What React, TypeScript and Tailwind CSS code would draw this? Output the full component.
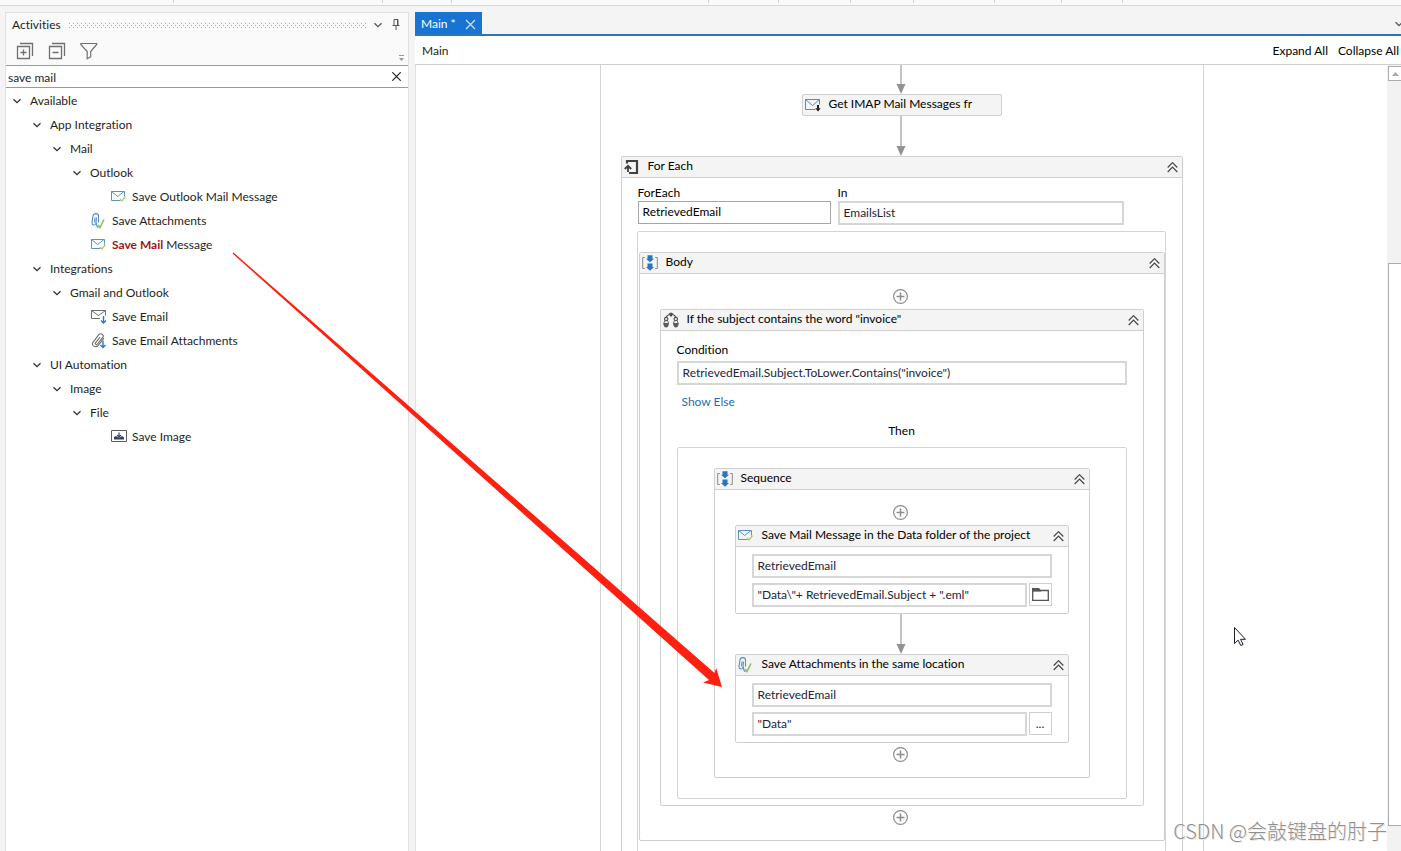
import React from 'react';

type IconName =
  | 'mailCheck'
  | 'clipCheck'
  | 'mailDown'
  | 'clipDown'
  | 'image'
  | 'imap'
  | 'loop'
  | 'sequence'
  | 'scales';

interface TreeNode {
  label: string;
  match?: string;
  icon?: IconName;
  children?: TreeNode[];
}

const tree: TreeNode[] = [
  {
    label: 'Available',
    children: [
      {
        label: 'App Integration',
        children: [
          {
            label: 'Mail',
            children: [
              {
                label: 'Outlook',
                children: [
                  { label: 'Save Outlook Mail Message', icon: 'mailCheck' },
                ],
              },
              { label: 'Save Attachments', icon: 'clipCheck' },
              { label: ' Message', match: 'Save Mail', icon: 'mailCheck' },
            ],
          },
        ],
      },
      {
        label: 'Integrations',
        children: [
          {
            label: 'Gmail and Outlook',
            children: [
              { label: 'Save Email', icon: 'mailDown' },
              { label: 'Save Email Attachments', icon: 'clipDown' },
            ],
          },
        ],
      },
      {
        label: 'UI Automation',
        children: [
          {
            label: 'Image',
            children: [
              {
                label: 'File',
                children: [{ label: 'Save Image', icon: 'image' }],
              },
            ],
          },
        ],
      },
    ],
  },
];

const ribbonGroups = [
  'w-[174px]',
  'w-[209px]',
  'w-[69px]',
  'w-[257px]',
  'w-[70px]',
  'w-[72px]',
  'w-[63px]',
  'w-[81px]',
  'w-[67px]',
  'w-[61px]',
];

const Icon: React.FC<{ name: IconName }> = ({ name }) => {
  const cls = 'w-4 h-4 shrink-0';
  switch (name) {
    case 'mailCheck':
      return (
        <svg className={cls} viewBox="0 0 16 16" fill="none">
          <path d="M9.500 11.500H.5v-9h13v5" stroke="#5b94c4" />
          <path d="M.5 2.500l6.200 5 6.300-5" stroke="#5b94c4" />
          <path d="M9 10l2 2L14.500 7.500" stroke="#a5cf6c" strokeWidth="1.300" />
        </svg>
      );
    case 'clipCheck':
      return (
        <svg className={cls} viewBox="0 0 16 16" fill="none">
          <path
            d="M7.500 9.500V3C7.500 -.2 2.500 -.2 2 3L1 9.500c0 3 3.500 3.500 4 .5l.5-5.500M4 4.500l-.5 5M5.500 10c0 3 .5 4.500 2 4.500"
            stroke="#4f8fca"
            strokeWidth="1.100"
          />
          <path d="M7 12l2 2.500L13 6.500" stroke="#8cc152" strokeWidth="1.600" />
        </svg>
      );
    case 'mailDown':
      return (
        <svg className={cls} viewBox="0 0 16 16" fill="none">
          <path d="M9 9.500H.5v-8h14v5" stroke="#6d6d6d" />
          <path d="M.5 1.500l7 5 7-5" stroke="#6d6d6d" />
          <path d="M12.500 7v7M10 11.500l2.500 2.500 2.500-2.500" stroke="#2f78c4" strokeWidth="1.400" />
        </svg>
      );
    case 'clipDown':
      return (
        <svg className={cls} viewBox="0 0 16 16" fill="none">
          <path
            d="M13 5l-5.700 7.300c-2.500 3-7.500 .2-5.300-3L7.600 1.800c1.800-2.300 6 0 4.300 2.400L6.500 11c-1 1.300-2.900 .1-2-1.200l4.600-5.600"
            stroke="#6d6d6d"
            strokeWidth="1.100"
          />
          <path d="M12 7.500v7M9.500 12l2.500 2.500 2.500-2.500" stroke="#2f78c4" strokeWidth="1.400" />
        </svg>
      );
    case 'image':
      return (
        <svg className={cls} viewBox="0 0 16 16" fill="none">
          <path d="M.5 1.500h15v11H.5z" stroke="#5c5c66" />
          <path d="M3 10.500V8l2-1 2 1.500h2L11 7l2 1.500v2z" fill="#33415c" />
          <path d="M8 3.500V8M6 6.200L8 8.200l2-2" stroke="#33415c" strokeWidth="1.200" />
        </svg>
      );
    case 'imap':
      return (
        <svg className={cls} viewBox="0 0 16 16" fill="none">
          <path d="M10.500 12.500H.5v-10h14v5" stroke="#4f8fca" />
          <path d="M.5 2.500l7 6 7-6" stroke="#4f8fca" />
          <path d="M13 8v3.500" stroke="#1c1c1c" strokeWidth="2" />
          <path d="M10.300 11.300h5.400L13 14.500z" fill="#1c1c1c" />
        </svg>
      );
    case 'loop':
      return (
        <svg className={cls} viewBox="0 0 16 16" fill="none">
          <path d="M3 4.500V2h10v12H5" stroke="#404040" strokeWidth="2.200" />
          <path d="M4 13V7.500M.8 10L4 6.800 7.200 10" stroke="#404040" strokeWidth="1.800" />
        </svg>
      );
    case 'sequence':
      return (
        <svg className={cls} viewBox="0 0 16 16" fill="none">
          <path d="M2.800 2.500H.7v11h2.100M13.200 2.500h2.100v11h-2.100" stroke="#8a8a8a" />
          <path d="M5.500 .3h5v3.500H12L8 7.300 4 3.800h1.500z" fill="#2b74bf" />
          <path d="M5.500 8.500h5V12H12l-4 3.700L4 12h1.500z" fill="#2b74bf" />
        </svg>
      );
    case 'scales':
      return (
        <svg className={cls} viewBox="0 0 16 16" fill="none">
          <path d="M8 .5v4M2.800 6C3.500 3.500 5.500 2.500 8 2.500s4.500 1 5.200 3.500" stroke="#484848" strokeWidth="1.200" />
          <path d="M5.500 1.200h5L8 4.800z" fill="#484848" />
          <circle cx="3.200" cy="7" r="1.700" stroke="#555" strokeWidth="1.200" />
          <circle cx="12.800" cy="7" r="1.700" stroke="#555" strokeWidth="1.200" />
          <path d="M1.800 8.500L.8 11.500M4.600 8.500l1 3M11.400 8.500l-1 3M14.200 8.500l1 3" stroke="#666" />
          <path d="M.3 11h5.600c0 3-1.400 4.500-2.800 4.500S.3 14 .3 11zM10.100 11h5.600c0 3-1.400 4.500-2.800 4.500s-2.800-1.500-2.800-4.500z" fill="#5a5a5a" />
        </svg>
      );
  }
};

const Chevron: React.FC<{ stroke?: string }> = ({ stroke = '#333' }) => (
  <svg className="w-2 h-2" viewBox="0 0 8 8" fill="none">
    <path d="M.5 2.200L4 5.700l3.500-3.500" stroke={stroke} strokeWidth="1.300" />
  </svg>
);

const TreeList: React.FC<{ nodes: TreeNode[] }> = ({ nodes }) => (
  <ul>
    {nodes.map((node) => (
      <li key={node.label}>
        <div className="h-6 flex items-center">
          {node.children ? (
            <button aria-label={`Toggle ${node.label}`} className="w-[17px]">
              <Chevron />
            </button>
          ) : (
            <span className="w-[18px]" />
          )}
          {node.icon && (
            <span className="mr-[5px]">
              <Icon name={node.icon} />
            </span>
          )}
          <span className="whitespace-pre">
            {node.match && <b className="text-[#a31515]">{node.match}</b>}
            {node.label}
          </span>
        </div>
        {node.children && (
          <div className="pl-5">
            <TreeList nodes={node.children} />
          </div>
        )}
      </li>
    ))}
  </ul>
);

const Arrow: React.FC<{ short?: boolean }> = ({ short }) => (
  <div className={`flex flex-col items-center pr-0.5 ${short ? 'h-[29px]' : 'h-10'}`}>
    <div className="w-0.5 flex-1 bg-[#c4c4c4]" />
    <svg className="w-2.5 h-2.5" viewBox="0 0 10 10">
      <path d="M.5 0h9L5 10z" fill="#929292" />
    </svg>
  </div>
);

const AddButton: React.FC<{ last?: boolean }> = ({ last }) => (
  <div className={`flex justify-center pr-0.5 ${last ? 'pt-1 pb-[15px]' : 'pt-[15px] pb-[5px]'}`}>
    <button aria-label="Add activity">
      <svg className="w-[15px] h-[15px]" viewBox="0 0 15 15" fill="none" stroke="#8c8c8c">
        <circle cx="7.500" cy="7.500" r="6.900" strokeWidth="1.200" />
        <path d="M7.500 3.500v8M3.500 7.500h8" strokeWidth="1.500" />
      </svg>
    </button>
  </div>
);

interface CardProps {
  title: string;
  icon: IconName;
  children?: React.ReactNode;
}

const Card: React.FC<CardProps> = ({ title, icon, children }) => (
  <section className="border border-[#cfcfcf] rounded-xs bg-white">
    <header className="h-[21px] flex items-center gap-2 pl-0.5 pr-1 bg-[#f4f4f4] border-b border-[#cfcfcf]">
      <Icon name={icon} />
      <h3 className="flex-1 leading-4 pb-0.5 text-black">{title}</h3>
      <button aria-label={`Collapse ${title}`}>
        <svg className="w-[11px] h-[11px]" viewBox="0 0 11 11" fill="none" stroke="#444">
          <path d="M.7 5.500L5.500 .7 10.300 5.500M.7 10l4.800-4.800 4.800 4.800" strokeWidth="1.200" />
        </svg>
      </button>
    </header>
    {children}
  </section>
);

const Field: React.FC<{ label: string; value: string; id?: string }> = ({ label, value, id }) => (
  <input
    id={id}
    aria-label={id ? undefined : label}
    defaultValue={value}
    className="h-6 w-full min-w-0 px-1 pb-0.5 border-2 border-[#d6d6d6] bg-white text-[#23233a] outline-none"
  />
);

const smallButton =
  'w-[23px] h-[23px] shrink-0 flex items-center justify-center border border-[#cfcfcf] bg-white';

export default function App() {
  return (
    <div className="relative h-screen flex flex-col overflow-hidden bg-[#f4f4f4] text-xs text-[#1e1e1e] [font-variant-ligatures:none] font-['Lato','Open_Sans',sans-serif]">
      <div className="h-1.5 shrink-0 flex items-start bg-[#fafafa] border-b border-[#d8d8d8]">
        {ribbonGroups.map((w) => (
          <div key={w} className={`${w} h-[3px] shrink-0 border-r border-[#d0d0d0]`} />
        ))}
      </div>

      <div className="flex-1 min-h-0 flex gap-1.5 pl-[5px] pt-1.5">
        <aside className="w-[404px] shrink-0 flex flex-col bg-white border-x border-t border-[#e0e0e0]">
          <div className="h-[52px] bg-[#fafafa]">
            <div className="h-6 flex items-center pl-1.5 pr-2">
              <h2>Activities</h2>
              <svg className="flex-1 h-[5px] mx-2">
                <defs>
                  <pattern id="grip" width="4" height="4" patternUnits="userSpaceOnUse">
                    <rect width="1" height="1" fill="#aaa" />
                    <rect x="2" y="2" width="1" height="1" fill="#aaa" />
                  </pattern>
                </defs>
                <rect width="100%" height="5" fill="url(#grip)" />
              </svg>
              <button aria-label="Panel menu" className="mr-2.5">
                <Chevron stroke="#555" />
              </button>
              <button aria-label="Pin panel">
                <svg className="w-2 h-3" viewBox="0 0 8 12" fill="none" stroke="#555">
                  <path d="M2 .5h4v6H2zM.5 6.500h7M4 7v4" />
                  <path d="M5.500 1v5" />
                </svg>
              </button>
            </div>
            <div className="h-7 flex items-center gap-3.5 pl-2.5 pr-0.5">
              <button aria-label="Expand all activities">
                <svg className="w-[18px] h-[18px]" viewBox="0 0 18 18" fill="none" stroke="#707070">
                  <path d="M1.500 4.500h12v12h-12zM4 1.500h12.500V14M7.500 7.500v6M4.500 10.500h6" strokeWidth="1.300" />
                </svg>
              </button>
              <button aria-label="Collapse all activities">
                <svg className="w-[18px] h-[18px]" viewBox="0 0 18 18" fill="none" stroke="#707070">
                  <path d="M1.500 4.500h12v12h-12zM4 1.500h12.500V14M4.500 10.500h6" strokeWidth="1.300" />
                </svg>
              </button>
              <button aria-label="Filter activities">
                <svg className="w-[18px] h-[18px]" viewBox="0 0 18 18" fill="none" stroke="#707070">
                  <path d="M.8 1.500h15.900v1L10.700 9.500v5.200l-3.500 2V9.500L.8 2.500z" strokeWidth="1.200" />
                </svg>
              </button>
              <svg className="w-[5px] h-[6px] ml-auto mr-0.5 mt-3.5" viewBox="0 0 5 6">
                <path d="M0 .5h5" stroke="#999" />
                <path d="M0 3h5L2.500 6z" fill="#999" />
              </svg>
            </div>
          </div>
          <div className="h-[23px] flex items-center pl-0.5 pr-[7px] bg-white border-y border-[#9a9a9a]">
            <input
              aria-label="Search activities"
              defaultValue="save mail"
              className="flex-1 min-w-0 pt-0.5 outline-none"
            />
            <button aria-label="Clear search">
              <svg className="w-[9px] h-[9px]" viewBox="0 0 9 9" stroke="#222" strokeWidth="1.200">
                <path d="M.3 .3l8.400 8.400M8.700 .3L.3 8.700" />
              </svg>
            </button>
          </div>
          <nav aria-label="Activities" className="pl-[7px] pt-px">
            <TreeList nodes={tree} />
          </nav>
        </aside>

        <main className="flex-1 min-w-0 flex flex-col">
          <div className="flex items-end justify-between border-b-2 border-[#2e75b6]">
            <button className="h-[22px] flex items-center gap-[9px] px-1.5 pt-0.5 bg-[#1874d2] text-white">
              Main *
              <svg className="w-[11px] h-[11px]" viewBox="0 0 11 11" stroke="#cfe3f7" strokeWidth="1.200">
                <path d="M1 1l9 9M10 1l-9 9" />
              </svg>
            </button>
            <button aria-label="Open tabs" className="mb-1.5 -mr-0.5">
              <Chevron stroke="#555" />
            </button>
          </div>
          <div className="h-[29px] shrink-0 flex items-center gap-2.5 pl-[7px] pr-0.5 pt-0.5 bg-white border-b border-[#d0d0d0]">
            <span className="flex-1">Main</span>
            <button className="text-black">Expand All</button>
            <button className="text-black">Collapse All</button>
          </div>

          <div className="flex-1 min-h-0 flex bg-white border-l border-[#e0e0e0]">
            <div className="flex-1 min-w-0 flex justify-center overflow-hidden">
              <div className="w-[604px] h-max shrink-0 px-5 border-x border-[#d4d4d4]">
                <Arrow short />
                <div className="w-[200px] h-[22px] mx-auto flex items-center gap-2 pl-0.5 border border-[#cfcfcf] rounded-xs bg-[#f4f4f4] text-black">
                  <Icon name="imap" />
                  <span className="pb-0.5">Get IMAP Mail Messages fr</span>
                </div>
                <Arrow />
                <Card title="For Each" icon="loop">
                  <div className="flex gap-[7px] pl-4 pr-[58px] pt-[7px] leading-4 text-black">
                    <div className="w-[193px]">
                      <label htmlFor="item" className="block">ForEach</label>
                      <input
                        id="item"
                        defaultValue="RetrievedEmail"
                        className="h-[23px] w-full px-1 pb-0.5 border border-[#a6a6a6] outline-none"
                      />
                    </div>
                    <div className="flex-1">
                      <label htmlFor="list" className="block">In</label>
                      <Field id="list" label="In" value="EmailsList" />
                    </div>
                  </div>
                  <div className="ml-[15px] mr-4 mt-1.5 pl-px pt-5 pb-6 border border-[#d4d4d4] rounded-xs">
                    <Card title="Body" icon="sequence">
                      <div className="px-5">
                        <AddButton />
                        <Card title={'If the subject contains the word "invoice"'} icon="scales">
                          <div className="px-4 pt-[11px] pb-1.5 leading-4">
                            <label htmlFor="condition" className="block mb-[3px] text-black">
                              Condition
                            </label>
                            <Field
                              id="condition"
                              label="Condition"
                              value={'RetrievedEmail.Subject.ToLower.Contains("invoice")'}
                            />
                            <button className="block mt-[9px] ml-[5px] text-[#1f6fb5]">Show Else</button>
                            <div className="mt-[13px] mb-2 text-center text-black">Then</div>
                            <div className="px-9 py-5 border border-[#d4d4d4] rounded-xs">
                              <Card title="Sequence" icon="sequence">
                                <div className="px-5">
                                  <AddButton />
                                  <Card
                                    title="Save Mail Message in the Data folder of the project"
                                    icon="mailCheck"
                                  >
                                    <div className="px-4 pt-[7px] pb-1.5 flex flex-col gap-[5px]">
                                      <Field label="Mail message" value="RetrievedEmail" />
                                      <div className="flex gap-0.5">
                                        <Field
                                          label="File path"
                                          value={'"Data\\"+ RetrievedEmail.Subject + ".eml"'}
                                        />
                                        <button aria-label="Browse folder" className={smallButton}>
                                          <svg className="w-[17px] h-[13px]" viewBox="0 0 17 13" fill="none">
                                            <path d="M.7 2.500h15.600v9.800H.7z" stroke="#555" strokeWidth="1.300" />
                                            <path d="M0 0h7l2 2.500v1H0z" fill="#555" />
                                          </svg>
                                        </button>
                                      </div>
                                    </div>
                                  </Card>
                                  <Arrow />
                                  <Card title="Save Attachments in the same location" icon="clipCheck">
                                    <div className="px-4 pt-[7px] pb-1.5 flex flex-col gap-[5px]">
                                      <Field label="Message" value="RetrievedEmail" />
                                      <div className="flex gap-0.5">
                                        <Field label="Folder path" value={'"Data"'} />
                                        <button className={smallButton}>...</button>
                                      </div>
                                    </div>
                                  </Card>
                                  <AddButton last />
                                </div>
                              </Card>
                            </div>
                          </div>
                        </Card>
                        <AddButton last />
                      </div>
                    </Card>
                  </div>
                </Card>
              </div>
            </div>

            <div className="w-3.5 shrink-0 flex flex-col pl-px pt-px bg-[#f2f2f2]">
              <button
                aria-label="Scroll up"
                className="h-[15px] shrink-0 flex items-center justify-center border border-r-0 border-[#ababab] bg-white"
              >
                <svg className="w-[7px] h-1" viewBox="0 0 7 4">
                  <path d="M0 4h7L3.500 0z" fill="#aaa" />
                </svg>
              </button>
              <div className="flex-[182]" />
              <div className="flex-[563] border border-r-0 border-[#ababab] bg-white" />
              <div className="flex-[25]" />
            </div>
          </div>
        </main>
      </div>

      <svg className="absolute inset-0 w-full h-full pointer-events-none" fill="none">
        <path
          d="M233.500 252.500L714.500 673l1.700-5 5.800 19-19-4.500 6-2.500L232.500 253.500z"
          fill="#ff2010"
        />
        <path
          d="M1234.500 627.500v16l3.600-3.300 2.700 5.300 2.300-1-2.500-5.200h4.900z"
          fill="#fff"
          stroke="#1a1a2a"
        />
      </svg>

      <div className="absolute right-3.5 bottom-1.5 text-xl leading-7 text-[#8f8f8f] text-shadow-[1px_1px_0_#e8e8e8] font-['Noto_Sans_CJK_SC',sans-serif] font-light">
        CSDN @会敲键盘的肘子
      </div>
    </div>
  );
}
